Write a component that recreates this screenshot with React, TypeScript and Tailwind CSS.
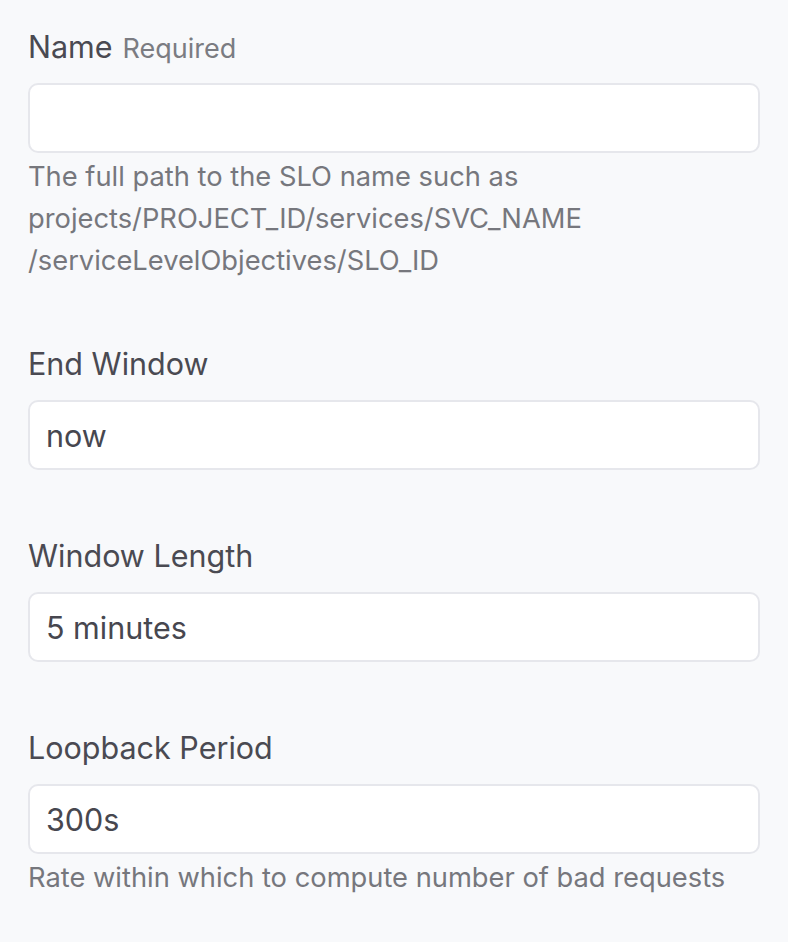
const fields = [
  {
    label: "Name",
    required: true,
    value: "",
    help: [
      "The full path to the SLO name such as",
      "projects/PROJECT_ID/services/SVC_NAME",
      "/serviceLevelObjectives/SLO_ID",
    ],
  },
  { label: "End Window", value: "now" },
  { label: "Window Length", value: "5 minutes" },
  {
    label: "Loopback Period",
    value: "300s",
    help: ["Rate within which to compute number of bad requests"],
  },
];

export default function App() {
  return (
    <main
      className="min-h-[942px] w-[788px] bg-[#f8f9fb] px-[28px] pt-[27px]"
      style={{ fontFamily: "Inter, 'Noto Sans', sans-serif" }}
    >
      <form className="flex flex-col">
        {fields.map((f) => (
          <div
            key={f.label}
            className={f.help ? "mb-[62px] flex flex-col" : "mb-[66px] flex flex-col"}
          >
            <label className="block h-[40px] text-[30.5px] leading-[40px] text-[#4a4a52]">
              {f.label}
              {f.required && (
                <span className="ml-[10px] text-[27px] text-[#7b7c82]">Required</span>
              )}
            </label>
            <input
              type="text"
              defaultValue={f.value}
              className="mt-[16px] h-[70px] w-full rounded-[10px] border-2 border-[#e6e7ec] bg-white px-[16px] text-[30.5px] text-[#47474f] outline-none"
            />
            {f.help && (
              <p className="mt-[3px] text-[27.3px] leading-[42px] text-[#76777d]">
                {f.help.map((line) => (
                  <span key={line} className="block">
                    {line}
                  </span>
                ))}
              </p>
            )}
          </div>
        ))}
      </form>
    </main>
  );
}
